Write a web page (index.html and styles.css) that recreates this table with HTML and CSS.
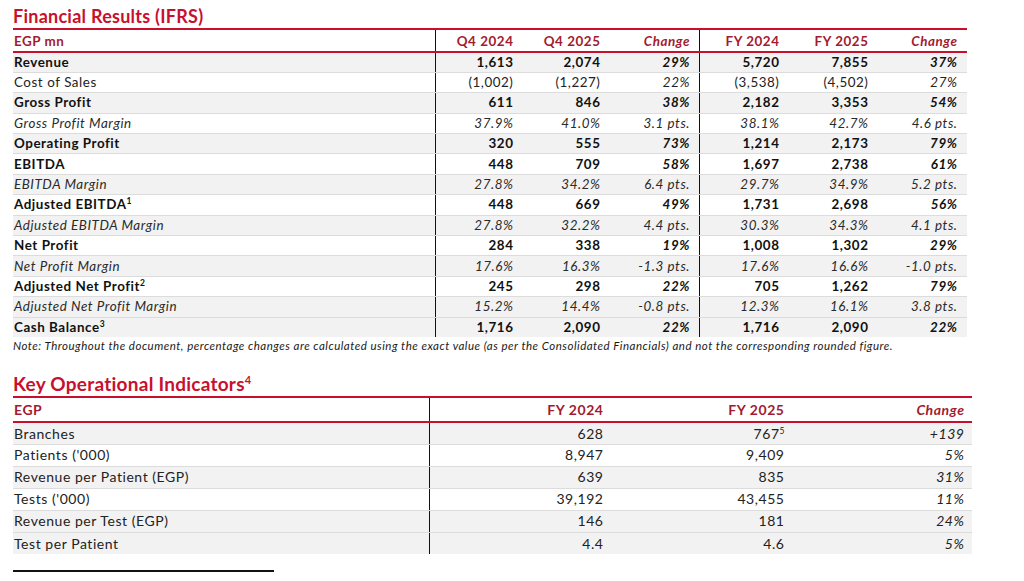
FILE: index.html
```html
<!DOCTYPE html>
<html>
<head>
<meta charset="utf-8">
<link rel="stylesheet" href="styles.css">
</head>
<body>
<div class="page">
  <section class="block fin">
    <h2 class="title">Financial Results (IFRS)</h2>
    <table class="tbl t1">
      <colgroup>
        <col class="c1"><col class="c2"><col class="c3"><col class="c4"><col class="c5"><col class="c6"><col class="c7">
      </colgroup>
      <thead>
        <tr><th class="lbl">EGP mn</th><th class="vl">Q4 2024</th><th>Q4 2025</th><th class="chg pr9">Change</th><th class="vl">FY 2024</th><th>FY 2025</th><th class="chg pr10">Change</th></tr>
      </thead>
      <tbody>
        <tr class="b sh"><td class="lbl">Revenue</td><td class="vl">1,613</td><td>2,074</td><td class="chg pr9">29%</td><td class="vl">5,720</td><td>7,855</td><td class="chg pr10">37%</td></tr>
        <tr><td class="lbl">Cost of Sales</td><td class="vl">(1,002)</td><td>(1,227)</td><td class="chg pr9">22%</td><td class="vl">(3,538)</td><td>(4,502)</td><td class="chg pr10">27%</td></tr>
        <tr class="b sh"><td class="lbl">Gross Profit</td><td class="vl">611</td><td>846</td><td class="chg pr9">38%</td><td class="vl">2,182</td><td>3,353</td><td class="chg pr10">54%</td></tr>
        <tr class="i"><td class="lbl">Gross Profit Margin</td><td class="vl">37.9%</td><td>41.0%</td><td class="chg pr9">3.1 pts.</td><td class="vl">38.1%</td><td>42.7%</td><td class="chg pr10">4.6 pts.</td></tr>
        <tr class="b sh"><td class="lbl">Operating Profit</td><td class="vl">320</td><td>555</td><td class="chg pr9">73%</td><td class="vl">1,214</td><td>2,173</td><td class="chg pr10">79%</td></tr>
        <tr class="b"><td class="lbl">EBITDA</td><td class="vl">448</td><td>709</td><td class="chg pr9">58%</td><td class="vl">1,697</td><td>2,738</td><td class="chg pr10">61%</td></tr>
        <tr class="i sh"><td class="lbl">EBITDA Margin</td><td class="vl">27.8%</td><td>34.2%</td><td class="chg pr9">6.4 pts.</td><td class="vl">29.7%</td><td>34.9%</td><td class="chg pr10">5.2 pts.</td></tr>
        <tr class="b"><td class="lbl">Adjusted EBITDA<sup>1</sup></td><td class="vl">448</td><td>669</td><td class="chg pr9">49%</td><td class="vl">1,731</td><td>2,698</td><td class="chg pr10">56%</td></tr>
        <tr class="i sh"><td class="lbl">Adjusted EBITDA Margin</td><td class="vl">27.8%</td><td>32.2%</td><td class="chg pr9">4.4 pts.</td><td class="vl">30.3%</td><td>34.3%</td><td class="chg pr10">4.1 pts.</td></tr>
        <tr class="b"><td class="lbl">Net Profit</td><td class="vl">284</td><td>338</td><td class="chg pr9">19%</td><td class="vl">1,008</td><td>1,302</td><td class="chg pr10">29%</td></tr>
        <tr class="i sh"><td class="lbl">Net Profit Margin</td><td class="vl">17.6%</td><td>16.3%</td><td class="chg pr9">-1.3 pts.</td><td class="vl">17.6%</td><td>16.6%</td><td class="chg pr10">-1.0 pts.</td></tr>
        <tr class="b"><td class="lbl">Adjusted Net Profit<sup>2</sup></td><td class="vl">245</td><td>298</td><td class="chg pr9">22%</td><td class="vl">705</td><td>1,262</td><td class="chg pr10">79%</td></tr>
        <tr class="i sh"><td class="lbl">Adjusted Net Profit Margin</td><td class="vl">15.2%</td><td>14.4%</td><td class="chg pr9">-0.8 pts.</td><td class="vl">12.3%</td><td>16.1%</td><td class="chg pr10">3.8 pts.</td></tr>
        <tr class="b sh last"><td class="lbl">Cash Balance<sup>3</sup></td><td class="vl">1,716</td><td>2,090</td><td class="chg pr9">22%</td><td class="vl">1,716</td><td>2,090</td><td class="chg pr10">22%</td></tr>
      </tbody>
    </table>
    <p class="note">Note: Throughout the document, percentage changes are calculated using the exact value (as per the Consolidated Financials) and not the corresponding rounded figure.</p>
  </section>

  <section class="block kpi">
    <h2 class="title t-big">Key Operational Indicators<sup>4</sup></h2>
    <table class="tbl t2">
      <colgroup>
        <col class="k1"><col class="k2"><col class="k3"><col class="k4">
      </colgroup>
      <thead>
        <tr><th class="lbl">EGP</th><th class="vl">FY 2024</th><th>FY 2025</th><th class="chg pr8">Change</th></tr>
      </thead>
      <tbody>
        <tr class="sh"><td class="lbl">Branches</td><td class="vl">628</td><td>767<sup>5</sup></td><td class="chg pr8">+139</td></tr>
        <tr><td class="lbl">Patients ('000)</td><td class="vl">8,947</td><td>9,409</td><td class="chg pr8">5%</td></tr>
        <tr class="sh"><td class="lbl">Revenue per Patient (EGP)</td><td class="vl">639</td><td>835</td><td class="chg pr8">31%</td></tr>
        <tr><td class="lbl">Tests ('000)</td><td class="vl">39,192</td><td>43,455</td><td class="chg pr8">11%</td></tr>
        <tr class="sh"><td class="lbl">Revenue per Test (EGP)</td><td class="vl">146</td><td>181</td><td class="chg pr8">24%</td></tr>
        <tr class="sh last"><td class="lbl">Test per Patient</td><td class="vl">4.4</td><td>4.6</td><td class="chg pr8">5%</td></tr>
      </tbody>
    </table>
  </section>

  <div class="footrule"></div>
</div>
</body>
</html>
```

FILE: styles.css
```css
html, body {
  margin: 0;
  padding: 0;
  background: #ffffff;
}
body {
  font-family: Lato, "Open Sans", "Liberation Sans", sans-serif;
  color: #1a1a1a;
}
.page {
  padding: 8px 0 0 13px;
}
.block.fin { width: 954px; }
.block.kpi { width: 959px; margin-top: 24px; }

.title {
  margin: 0;
  font-size: 18px;
  letter-spacing: 0.25px;
  line-height: 16px;
  height: 20px;
  font-weight: 700;
  color: #c8102e;
  border-bottom: 2px solid #c8102e;
  white-space: nowrap;
  overflow: visible;
}
.title.t-big {
  font-size: 19px;
}
.title sup {
  font-size: 11px;
  line-height: 0;
  vertical-align: 7px;
}

.tbl {
  border-collapse: collapse;
  table-layout: fixed;
  width: 100%;
}
.t1 .c1 { width: 422px; }
.t1 .c2 { width: 83px; }
.t1 .c3 { width: 87px; }
.t1 .c4 { width: 94px; }
.t1 .c5 { width: 85px; }
.t1 .c6 { width: 89px; }
.t1 .c7 { width: 94px; }

.t2 .k1 { width: 416px; }
.t2 .k2 { width: 179px; }
.t2 .k3 { width: 181px; }
.t2 .k4 { width: 183px; }

.tbl th, .tbl td {
  padding: 0 4.5px 0 0;
  text-align: right;
  white-space: nowrap;
  overflow: visible;
}
.tbl .lbl {
  text-align: left;
  padding-left: 1px;
}
.tbl .pr8 { padding-right: 7.5px; }
.tbl .pr9 { padding-right: 8.5px; }
.tbl .pr10 { padding-right: 9.5px; }
.tbl .vl { border-left: 1px solid #111; }

.tbl th {
  font-weight: 700;
  color: #a31b2f;
  border-bottom: 2px solid #c8102e;
}
.tbl th.chg { font-style: italic; }

.t1 {
  font-size: 13.4px;
  letter-spacing: 0.55px;
}
.t1 th { height: 21px; }
.t1 td {
  height: 20.4px;
  line-height: 15px;
  border-bottom: 1px solid #dcdcdc;
  box-sizing: border-box;
  color: #222;
}
.t1 td.chg { font-style: italic; }
.t1 tr.b td { font-weight: 700; color: #111; }
.t1 tr.i td { font-style: italic; color: #2a2a2a; }
.tbl tr.sh td { background: #f2f2f2; }
.tbl tr.last td { border-bottom: none; }

.t1 sup, .t2 td sup {
  font-size: 8.5px;
  letter-spacing: 0;
  line-height: 0;
  vertical-align: 5px;
}

.t2 {
  font-size: 14px;
  letter-spacing: 0.55px;
}
.t2 th { height: 23px; }
.t2 td {
  height: 22px;
  line-height: 16px;
  border-bottom: 1px solid #dcdcdc;
  box-sizing: border-box;
  color: #222;
}
.t2 td.chg { font-style: italic; }

.note {
  margin: 2px 0 0 0;
  font-size: 11.5px;
  letter-spacing: 0.5px;
  line-height: 13px;
  font-style: italic;
  color: #1a1a1a;
  white-space: nowrap;
}

.footrule {
  width: 261px;
  height: 2px;
  background: #111;
  margin-top: 16px;
}
```
